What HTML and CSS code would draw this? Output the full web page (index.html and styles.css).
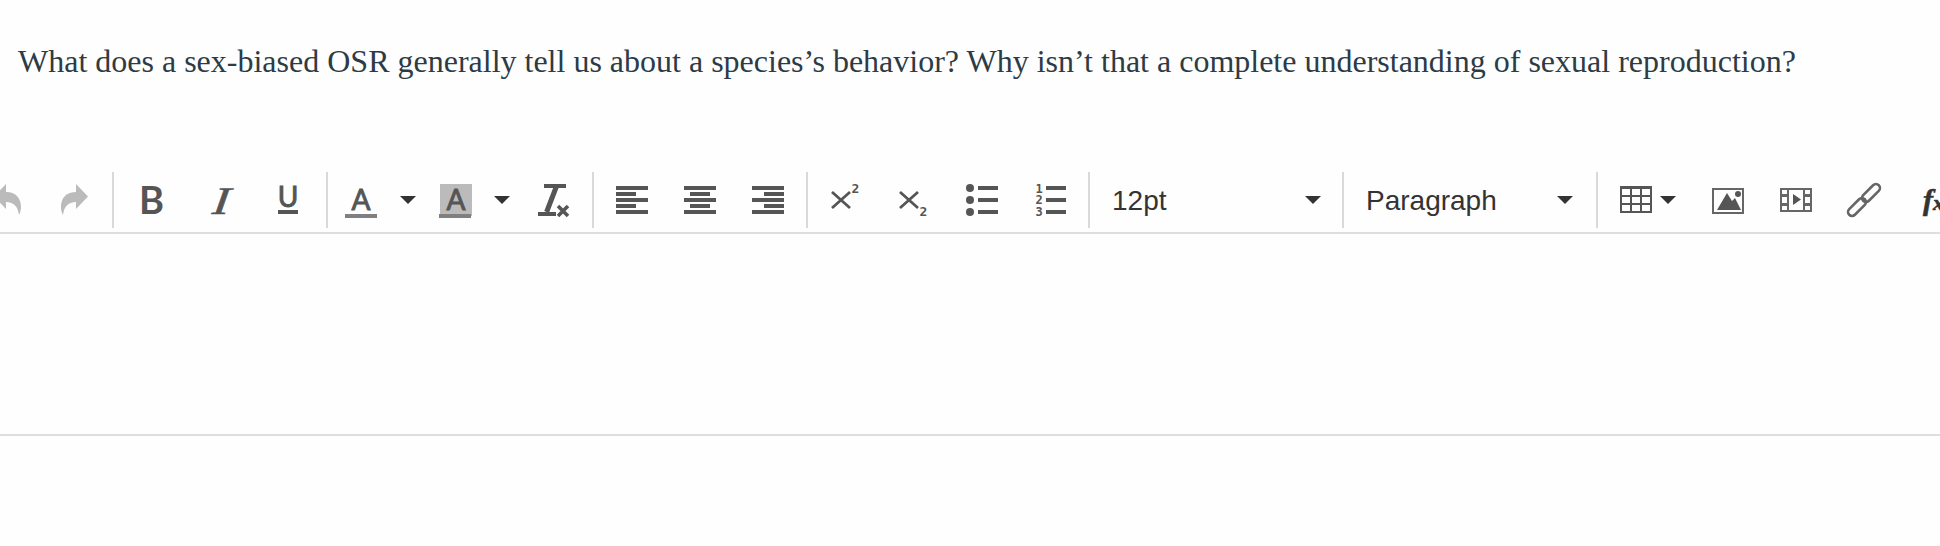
FILE: index.html
```html
<!DOCTYPE html>
<html lang="en">
<head>
<meta charset="utf-8">
<title>Question</title>
<link rel="stylesheet" href="styles.css">
</head>
<body>
<p class="question">What does a sex-biased OSR generally tell us about a species’s behavior? Why isn’t that a complete understanding of sexual reproduction?</p>
<div class="editor">
  <div class="toolbar">
    <div class="group first">
      <span class="btn"><svg class="ico" viewBox="0 0 32 32"><path class="dis" d="M16 0 L4 12.5 L16 25 V18 C24 18 28 23 29 31 C33 24 32 8 16 8 Z"/></svg></span>
      <span class="btn"><svg class="ico" viewBox="0 0 32 32"><path class="dis" d="M18 0 L30 12.5 L18 25 V18 C10 18 6 23 5 31 C1 24 2 8 18 8 Z"/></svg></span>
    </div>
    <div class="group">
      <span class="btn"><svg class="ico" viewBox="0 0 32 32"><text class="g sans b" x="15.500" y="30" font-size="38">B</text></svg></span>
      <span class="btn"><svg class="ico" viewBox="0 0 32 32"><text class="g serif it" transform="translate(16 29.500) skewX(-7) scale(1.300 1)" font-size="39">I</text></svg></span>
      <span class="btn"><svg class="ico" viewBox="0 0 32 32"><text class="g sans thick" x="16" y="23" font-size="28">U</text><rect class="f" x="6" y="26" width="20" height="4"/></svg></span>
    </div>
    <div class="group">
      <span class="btn split-a"><svg class="ico" viewBox="0 0 32 32"><text class="g sans thick" x="16" y="26" font-size="28">A</text><rect class="line" x="0" y="30" width="32" height="4"/></svg></span>
      <span class="caret-box c1"><i class="caret"></i></span>
      <span class="btn split-b"><svg class="ico" viewBox="0 0 32 32"><rect class="hl" x="0" y="0" width="32" height="32"/><text class="g sans thick" x="16" y="26" font-size="28">A</text><rect class="line" x="-1" y="30" width="32" height="4"/></svg></span>
      <span class="caret-box c2"><i class="caret"></i></span>
      <span class="btn split-c"><svg class="ico" viewBox="0 0 32 32"><rect class="f" x="7" y="0" width="22" height="4"/><path class="stem" d="M19.600 2 L9.600 28"/><rect class="f" x="1" y="28" width="18" height="4"/><path class="st x" d="M21 22 L31 32 M31 22 L21 32"/></svg></span>
    </div>
    <div class="group">
      <span class="btn"><svg class="ico" viewBox="0 0 32 32"><path class="f" d="M0 2h32v4H0zM0 8h20v4H0zM0 14h32v4H0zM0 20h20v4H0zM0 26h32v4H0z"/></svg></span>
      <span class="btn"><svg class="ico" viewBox="0 0 32 32"><path class="f" d="M0 2h32v4H0zM6 8h20v4H6zM0 14h32v4H0zM6 20h20v4H6zM0 26h32v4H0z"/></svg></span>
      <span class="btn"><svg class="ico" viewBox="0 0 32 32"><path class="f" d="M0 2h32v4H0zM12 8h20v4H12zM0 14h32v4H0zM12 20h20v4H12zM0 26h32v4H0z"/></svg></span>
    </div>
    <div class="group">
      <span class="btn"><svg class="ico" viewBox="0 0 32 32"><path class="st" d="M2 8 L20 24 M20 8 L2 24"/><text class="dig" x="21.500" y="9" font-size="13">2</text></svg></span>
      <span class="btn"><svg class="ico" viewBox="0 0 32 32"><path class="st" d="M2 8 L20 24 M20 8 L2 24"/><text class="dig" x="21.500" y="32" font-size="13">2</text></svg></span>
      <span class="btn"><svg class="ico" viewBox="0 0 32 32"><circle class="f" cx="4" cy="4" r="4"/><circle class="f" cx="4" cy="16" r="4"/><circle class="f" cx="4" cy="28" r="4"/><path class="f" d="M12 2h20v4H12zM12 14h20v4H12zM12 26h20v4H12z"/></svg></span>
      <span class="btn"><svg class="ico" viewBox="0 0 32 32"><text class="dig" x="1.500" y="8.500" font-size="12">1</text><text class="dig" x="1.500" y="20" font-size="12">2</text><text class="dig" x="1.500" y="32" font-size="12">3</text><path class="f" d="M12 2h20v4H12zM12 14h20v4H12zM12 26h20v4H12z"/></svg></span>
    </div>
    <div class="group select s-size"><span class="label">12pt</span><i class="caret"></i></div>
    <div class="group select s-format"><span class="label">Paragraph</span><i class="caret"></i></div>
    <div class="group last">
      <span class="btn split-t"><svg class="ico" viewBox="0 0 32 32"><path class="f" d="M0 2h32v27H0zM2 5v6h8V5zM12 5v6h8V5zM22 5v6h8V5zM2 13v6h8v-6zM12 13v6h8v-6zM22 13v6h8v-6zM2 21v6h8v-6zM12 21v6h8v-6zM22 21v6h8v-6z" fill-rule="evenodd"/></svg></span>
      <span class="caret-box c3"><i class="caret"></i></span>
      <span class="btn"><svg class="ico" viewBox="0 0 32 32"><path class="frame" d="M0 4h32v26H0zM2 6v22h28V6z" fill-rule="evenodd"/><path class="f" d="M5 26 L15 9 L20 17 L23 14 L29 26 Z"/><circle class="f" cx="26" cy="10" r="3"/></svg></span>
      <span class="btn"><svg class="ico" viewBox="0 0 32 32"><path class="frame" d="M0 4h32v24H0zM2 6v4h5V6zM2 13v6h5v-6zM2 22v4h5v-4zM25 6v4h5V6zM25 13v6h5v-6zM25 22v4h5v-4zM9 6v20h14V6z" fill-rule="evenodd"/><path class="f" d="M13 10 L21 15.500 L13 21 Z"/></svg></span>
      <span class="btn"><svg class="ico" viewBox="0 0 32 32"><g class="link"><rect x="12" y="5" width="22" height="8" rx="4" transform="rotate(-45 23 9)"/><rect x="-2" y="19" width="22" height="8" rx="4" transform="rotate(-45 9 23)"/></g></svg></span>
      <span class="btn"><svg class="ico" viewBox="0 0 32 32"><text class="fx" x="7" y="26" font-size="30">f<tspan font-size="22">x</tspan></text></svg></span>
    </div>
  </div>
  <div class="body-area"></div>
  <div class="status"></div>
</div>
</body>
</html>
```
FILE: styles.css
```css
html, body { margin: 0; padding: 0; background: #fefefe; }
body { width: 1940px; height: 546px; overflow: hidden; }

.question {
  margin: 0;
  padding: 43px 0 0 18px;
  height: 120px;
  box-sizing: border-box;
  font-family: "Liberation Serif", serif;
  font-size: 32px;
  line-height: 36px;
  color: #2d3b45;
  white-space: nowrap;
}

.editor { width: 1940px; overflow: hidden; }

.toolbar {
  display: flex;
  margin-left: -32px;
  width: 2100px;
  height: 56px;
  padding: 52px 0 4px;
  border-bottom: 2px solid #dedede;
}

.group {
  display: flex;
  align-items: center;
  height: 56px;
  padding: 0 4px;
  border-right: 2px solid #d9d9d9;
  flex: none;
}
.group.last { border-right: 0; }

.btn {
  display: flex;
  align-items: center;
  justify-content: center;
  width: 68px;
  height: 56px;
  flex: none;
}
.split-a { width: 58px; }
.split-b { width: 60px; }
.split-c { width: 70px; }
.split-t { width: 32px; margin-left: 18px; }

.caret-box { display: flex; align-items: center; justify-content: center; height: 56px; flex: none; }
.c1 { width: 36px; }
.c2 { width: 32px; }
.c3 { width: 32px; margin-right: 10px; }

.caret {
  display: block;
  width: 0;
  height: 0;
  border-left: 8px solid transparent;
  border-right: 8px solid transparent;
  border-top: 8px solid #333;
}

.ico { display: block; width: 32px; height: 32px; overflow: visible; }
.dis { fill: #bbb; }
.f { fill: #555; }
.frame { fill: #666; }
.hl { fill: #bbb; }
.line { fill: #808080; }
.st { fill: none; stroke: #555; stroke-width: 2.8; }
.st.x { stroke-width: 3.6; }
.stem { fill: none; stroke: #555; stroke-width: 5; }
.link rect { fill: none; stroke: #666; stroke-width: 2.6; }
.g { fill: #555; text-anchor: middle; }
.sans { font-family: "Lato", sans-serif; }
.serif { font-family: "Liberation Serif", serif; }
.b { font-weight: 700; }
.thick { stroke: #555; stroke-width: 0.9; }
.it { font-style: italic; stroke: #555; stroke-width: 0.6; }
.dig { fill: #555; font-family: "DejaVu Sans Mono", monospace; font-weight: 700; }
.fx { fill: #333; font-family: "Liberation Serif", serif; font-style: italic; font-weight: 700; stroke: #333; stroke-width: 0.6; }

.select { justify-content: space-between; padding: 0 21px 0 22px; box-sizing: border-box; }
.s-size { width: 254px; }
.s-format { width: 254px; padding-right: 23px; }
.label {
  font-family: "Liberation Sans", sans-serif;
  font-size: 28px;
  color: #333;
  white-space: nowrap;
  padding-top: 2px;
}

.body-area { height: 200px; }
.status { height: 110px; border-top: 2px solid #dedede; }
```
